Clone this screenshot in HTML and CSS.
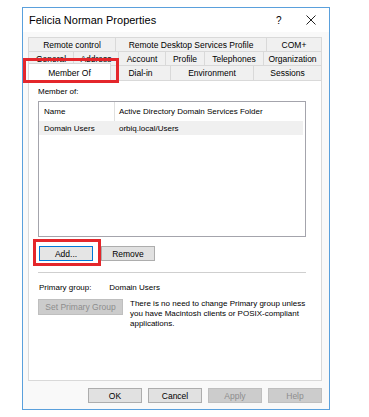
FILE: index.html
```html
<!DOCTYPE html>
<html lang="en">
<head>
    <meta charset="UTF-8">
    <title>Felicia Norman Properties</title>
    <link rel="stylesheet" href="styles.css">
</head>
<body>
    <div class="window">
        <div class="titlebar">
            <span class="title">Felicia Norman Properties</span>
            <span class="help">?</span>
            <span class="close">
                <svg width="10" height="10" viewBox="0 0 10 10"><path d="M0.5 0.5 L9.5 9.5 M9.5 0.5 L0.5 9.5" stroke="#222" stroke-width="1" fill="none"/></svg>
            </span>
        </div>

        <div class="tabs">
            <div class="tab-row row-one">
                <div class="tab">Remote control</div>
                <div class="tab">Remote Desktop Services Profile</div>
                <div class="tab">COM+</div>
            </div>
            <div class="tab-row row-two">
                <div class="tab">General</div>
                <div class="tab">Address</div>
                <div class="tab">Account</div>
                <div class="tab">Profile</div>
                <div class="tab">Telephones</div>
                <div class="tab">Organization</div>
            </div>
            <div class="tab-row row-three">
                <div class="tab selected marked">Member Of</div>
                <div class="tab">Dial-in</div>
                <div class="tab">Environment</div>
                <div class="tab">Sessions</div>
            </div>
        </div>

        <div class="panel">
            <div class="label">Member of:</div>
            <div class="listbox">
                <div class="list-row list-head">
                    <div class="col-name">Name</div>
                    <div class="col-folder">Active Directory Domain Services Folder</div>
                </div>
                <div class="list-row list-item">
                    <div class="col-name">Domain Users</div>
                    <div class="col-folder">orbiq.local/Users</div>
                </div>
            </div>

            <div class="button-row">
                <button class="btn focused marked-add">Add...</button>
                <button class="btn">Remove</button>
            </div>

            <div class="separator"></div>

            <div class="primary">
                <span class="primary-label">Primary group:</span>
                <span>Domain Users</span>
            </div>

            <div class="primary-set">
                <button class="btn wide disabled">Set Primary Group</button>
                <p class="note">There is no need to change Primary group unless you have Macintosh clients or POSIX-compliant applications.</p>
            </div>
        </div>

        <div class="footer">
            <button class="btn">OK</button>
            <button class="btn">Cancel</button>
            <button class="btn disabled">Apply</button>
            <button class="btn disabled">Help</button>
        </div>
    </div>
</body>
</html>
```

FILE: styles.css
```css
body {
    margin: 0;
    background: #fff;
    font-family: "Liberation Sans", Arial, sans-serif;
    font-size: 8px;
    color: #000;
}
.window {
    margin: 7px 0 0 22px;
    width: 306px;
    height: 401px;
    border: 1px solid #5aa0dc;
    background: #f9f9f9;
    display: flex;
    flex-direction: column;
}
.titlebar {
    height: 24px;
    margin-bottom: 5px;
    background: #fff;
    display: flex;
    align-items: center;
    padding-left: 6px;
}
.title {
    font-size: 11px;
    flex: 1;
}
.help {
    font-size: 10px;
    width: 30px;
}
.close {
    width: 23px;
    display: flex;
}
.tabs {
    margin-left: 5px;
    width: 294px;
}
.tab-row {
    display: grid;
    height: 14px;
}
.row-one { grid-template-columns: 87px 151px 1fr; }
.row-two { grid-template-columns: 45px 45px 47px 39px 59px 1fr; }
.row-three { grid-template-columns: 82px 60px 83px 1fr; height: 15px; }
.tab {
    border: 1px solid #d9d9d9;
    border-bottom: none;
    margin-right: -1px;
    background: #f0f0f0;
    display: flex;
    align-items: center;
    justify-content: center;
    white-space: nowrap;
    font-size: 8.5px;
}
.tab:last-child { margin-right: 0; }
.tab.selected {
    background: #fff;
    margin-top: -2px;
    margin-bottom: -1px;
    position: relative;
    z-index: 1;
}
.marked::after,
.marked-add::after {
    content: "";
    position: absolute;
    border: 3px solid #e4262b;
}
.marked::after { left: -6px; right: -9px; top: -6px; bottom: -2px; }
.marked-add { position: relative; }
.marked-add::after { left: -7px; right: -9px; top: -8px; bottom: -6px; }
.panel {
    height: 299px;
    margin-left: 5px;
    width: 278px;
    border: 1px solid #d9d9d9;
    background: #fff;
    padding: 0 5px 0 9px;
    position: relative;
}
.label {
    margin-top: 5px;
    height: 12px;
    line-height: 12px;
}
.listbox {
    margin-top: 3px;
    height: 134px;
    width: 266px;
    border: 1px solid #a4a4ac;
}
.list-row {
    display: grid;
    grid-template-columns: 76px 1fr;
    align-items: center;
}
.list-head { height: 19px; }
.list-head .col-name { border-right: 1px solid #e0e0e0; height: 19px; line-height: 19px; }
.list-item { height: 14px; background: #f0f0f0; margin-right: 2px; }
.col-name { padding-left: 5px; }
.col-folder { padding-left: 4px; white-space: nowrap; }
.btn {
    font-family: inherit;
    font-size: 8.5px;
    width: 54px;
    height: 15px;
    padding: 0;
    border: 1px solid #adadad;
    background: #e1e1e1;
    color: #000;
}
.btn.focused {
    border-color: #0078d7;
    background: #e5e5e5;
}
.btn.disabled {
    background: #cccccc;
    border-color: #bfbfbf;
    color: #8c8c8c;
}
.btn.wide { width: 85px; height: 16px; flex: none; }
.button-row {
    margin-top: 9px;
    margin-left: 1px;
    display: flex;
    gap: 8px;
}
.separator {
    margin-top: 11px;
    height: 1px;
    width: 268px;
    background: #cfcfcf;
}
.primary {
    margin-top: 9px;
    height: 12px;
    line-height: 12px;
    padding-left: 1px;
}
.primary-label {
    display: inline-block;
    width: 68px;
}
.primary-set {
    margin-top: 5px;
    display: flex;
    gap: 7px;
}
.note {
    margin: 0;
    width: 178px;
    line-height: 10px;
}
.footer {
    margin-top: 7px;
    display: flex;
    justify-content: flex-end;
    gap: 6px;
    padding-right: 7px;
}
```
